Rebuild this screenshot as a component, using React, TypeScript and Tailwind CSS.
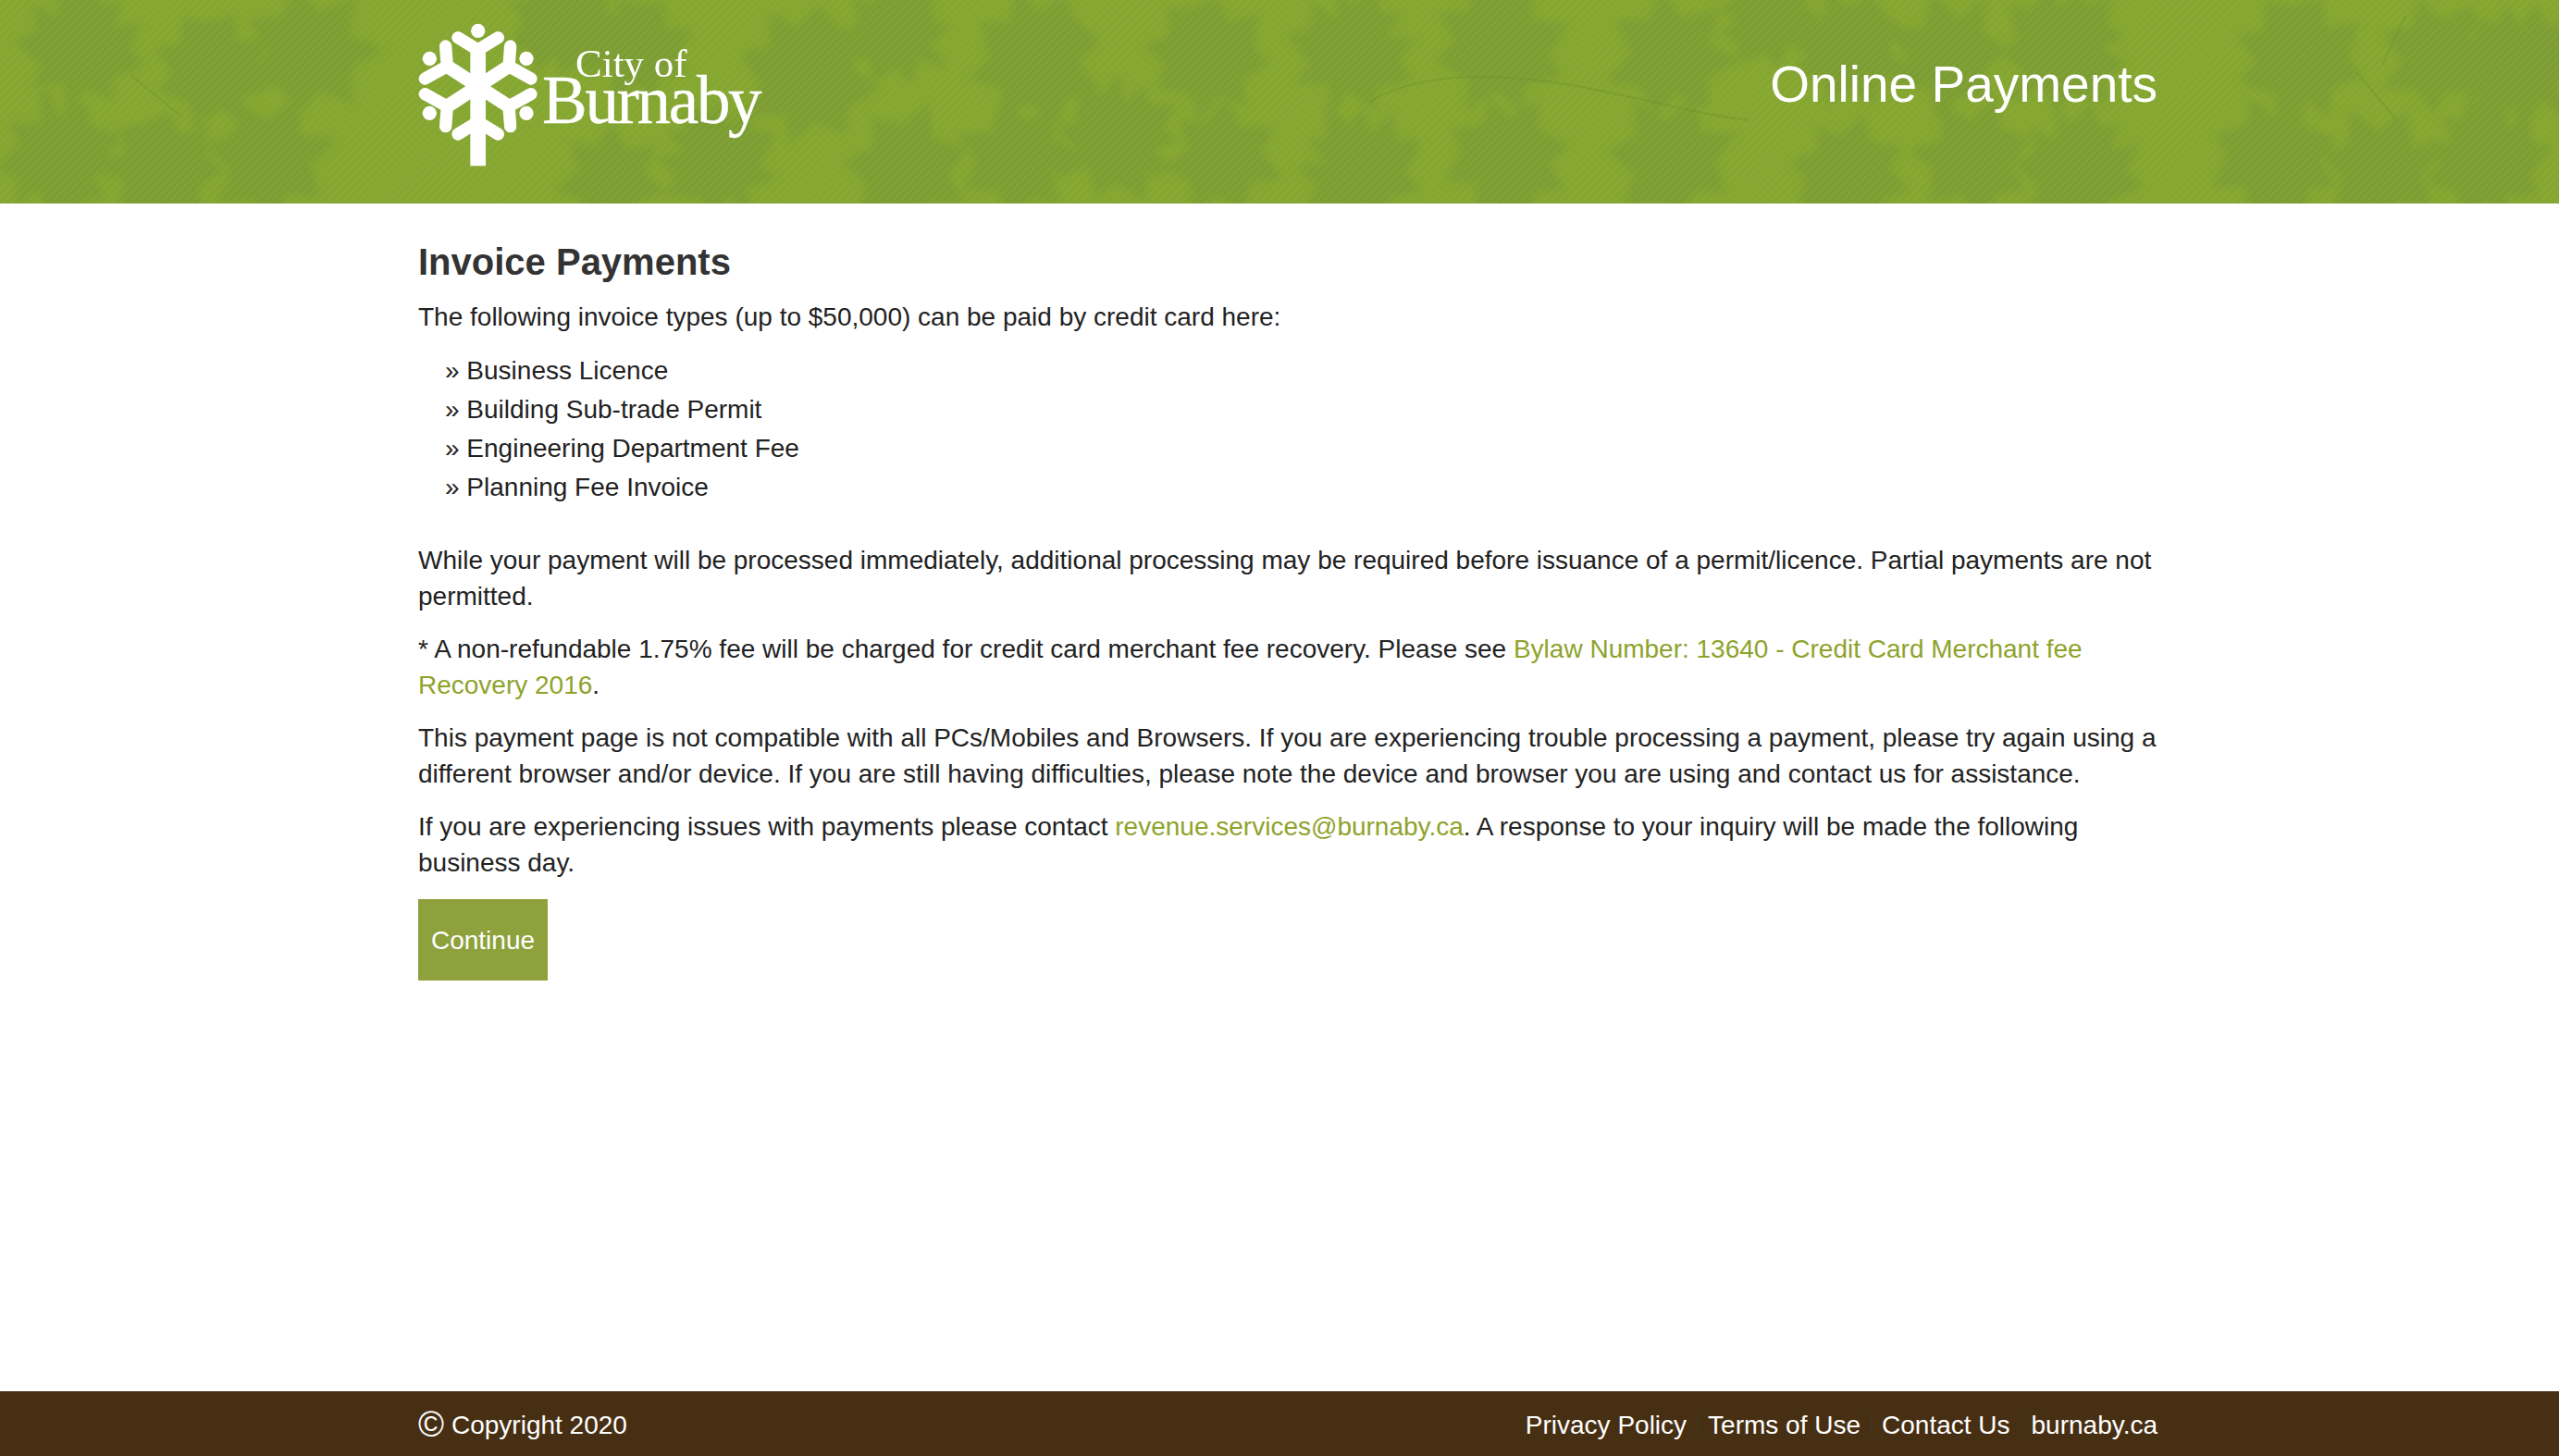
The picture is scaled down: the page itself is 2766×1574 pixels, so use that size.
import React from 'react';

const leaves = [
  { x: 88, y: 50, s: 1.2, r: 10 }, { x: 230, y: 75, s: 1.1, r: -25 }, { x: 335, y: 55, s: 1.25, r: 35 },
  { x: 66, y: 172, s: 1.2, r: 165 }, { x: 176, y: 182, s: 1.1, r: -40 }, { x: 290, y: 172, s: 1.2, r: 20 },
  { x: 610, y: 25, s: 1.1, r: 150 }, { x: 690, y: 52, s: 1.0, r: -15 }, { x: 660, y: 192, s: 1.0, r: 50 },
  { x: 776, y: 172, s: 1.15, r: -30 }, { x: 873, y: 80, s: 1.3, r: 15 }, { x: 980, y: 182, s: 1.2, r: 170 },
  { x: 970, y: 35, s: 1.0, r: -55 }, { x: 1120, y: 62, s: 1.25, r: 30 }, { x: 1100, y: 172, s: 1.15, r: -20 },
  { x: 1208, y: 150, s: 1.2, r: 60 }, { x: 1305, y: 60, s: 1.15, r: -35 }, { x: 1322, y: 172, s: 1.1, r: 155 },
  { x: 1462, y: 55, s: 1.2, r: 20 }, { x: 1621, y: 50, s: 1.25, r: -15 }, { x: 1806, y: 60, s: 1.2, r: 40 },
  { x: 1471, y: 182, s: 1.2, r: -30 }, { x: 1630, y: 172, s: 1.15, r: 165 }, { x: 1806, y: 172, s: 1.2, r: 15 },
  { x: 1912, y: 18, s: 1.0, r: -50 }, { x: 2000, y: 52, s: 1.1, r: 25 }, { x: 2106, y: 60, s: 1.15, r: -20 },
  { x: 2230, y: 52, s: 1.25, r: 45 }, { x: 2000, y: 190, s: 1.1, r: 150 }, { x: 2133, y: 172, s: 1.15, r: -35 },
  { x: 2247, y: 182, s: 1.2, r: 10 }, { x: 2485, y: 62, s: 1.2, r: -25 }, { x: 2635, y: 60, s: 1.1, r: 30 },
  { x: 2723, y: 70, s: 1.2, r: -45 }, { x: 2460, y: 172, s: 1.2, r: 160 }, { x: 2573, y: 182, s: 1.15, r: 20 },
  { x: 2688, y: 172, s: 1.2, r: -15 },
];

// three outlines so the leaves don't all look stamped from one shape
const leafPaths = [
  'M0 -62 L12 -40 L30 -46 L24 -22 L50 -30 L42 -6 L60 6 L32 24 L38 44 L8 36 L4 62 L-4 62 L-8 36 L-38 44 L-32 24 L-60 6 L-42 -6 L-50 -30 L-24 -22 L-30 -46 L-12 -40 Z',
  'M-6 -58 L16 -44 L40 -40 L34 -14 L62 -4 L40 18 L44 40 L14 38 L2 60 L-10 38 L-42 46 L-34 20 L-58 -2 L-36 -14 L-44 -42 L-18 -36 Z',
  'M6 -60 L20 -30 L52 -38 L38 -8 L56 16 L26 24 L24 52 L-2 40 L-30 54 L-28 22 L-58 8 L-36 -12 L-46 -42 L-14 -32 Z',
];

function HeaderTexture() {
  return (
    <svg className="absolute inset-0 h-full w-full" viewBox="0 0 2766 220" preserveAspectRatio="none" aria-hidden="true">
      <defs>
        <pattern id="weave" width="6" height="6" patternUnits="userSpaceOnUse" patternTransform="rotate(45)">
          <rect width="3" height="6" fill="#ffffff" fillOpacity="0.03" />
        </pattern>
        <filter id="soft"><feGaussianBlur stdDeviation="4" /></filter>
      </defs>
      <g filter="url(#soft)" fill="#7c9d30">
        {leaves.map((l, i) => (
          <path key={i} d={leafPaths[i % 3]} transform={`translate(${l.x} ${l.y}) rotate(${l.r}) scale(${l.s})`} />
        ))}
      </g>
      <path
        d="M141 81 L195 125 M1480 110 C1540 75 1620 80 1700 92 C1770 105 1840 125 1890 130 M2547 78 L2591 130 M2600 17 L2575 70"
        stroke="#6f922a"
        strokeOpacity="0.5"
        strokeWidth="2"
        fill="none"
      />
      <rect width="2766" height="220" fill="url(#weave)" />
    </svg>
  );
}

function Logo() {
  return (
    <svg className="block" width="380" height="190" viewBox="0 0 380 190" role="img" aria-label="City of Burnaby">
      <g transform="translate(-32 0) scale(0.3333)" fill="none" stroke="#fff" strokeLinecap="round" strokeLinejoin="round">
        <g fill="#fff" stroke="none">
          <circle cx="290" cy="100" r="23" />
          <circle cx="133" cy="190" r="23" />
          <circle cx="447" cy="190" r="23" />
          <circle cx="133" cy="367" r="23" />
          <circle cx="447" cy="367" r="23" />
          <rect x="265" y="150" width="50" height="388" />
        </g>
        <g strokeWidth="40">
          <path d="M225 122 L290 162 L355 122" />
          <path d="M225 435 L290 395 L355 435" />
          <path d="M185 150 L190 215 L118 255" />
          <path d="M395 150 L390 215 L462 255" />
          <path d="M185 410 L190 345 L118 305" />
          <path d="M395 410 L390 345 L462 305" />
          <path d="M190 215 L390 345 M390 215 L190 345" strokeWidth="44" />
        </g>
      </g>
      <g fill="#fff" fontFamily="'Liberation Serif', serif">
        <text x="170" y="83" fontSize="43">City of</text>
        <text x="134" y="133" fontSize="73" letterSpacing="-2.3" stroke="#fff" strokeWidth="0.4">Burnaby</text>
      </g>
    </svg>
  );
}

function Sep() {
  return <span className="mx-[11px] h-[26px] w-px bg-[#3a3a2a]" />;
}

export default function App() {
  return (
    <div className="flex h-screen flex-col overflow-hidden bg-white font-['Liberation_Sans',Arial,sans-serif] text-[28px] leading-[39px] text-[#222222]">
      <header className="relative h-[220px] shrink-0 bg-[#85a730]">
        <HeaderTexture />
        <div className="relative ml-[452px] flex h-full w-[1880px] items-start justify-between">
          <Logo />
          <h2 className="pt-[57px] text-[55px] leading-[68px] text-white">Online Payments</h2>
        </div>
      </header>

      <main className="ml-[452px] w-[1880px] flex-1 pt-[41px]">
        <h1 className="text-[40px] font-bold leading-[44px] text-[#333333]">Invoice Payments</h1>
        <p className="mt-[18px]">The following invoice types (up to $50,000) can be paid by credit card here:</p>
        <ul className="mt-[18px] pl-[29px] leading-[42px]">
          <li>» Business Licence</li>
          <li>» Building Sub-trade Permit</li>
          <li>» Engineering Department Fee</li>
          <li>» Planning Fee Invoice</li>
        </ul>
        <p className="mt-[38px]">
          While your payment will be processed immediately, additional processing may be required before issuance of a permit/licence. Partial payments are not permitted.
        </p>
        <p className="mt-[18px]">
          * A non-refundable 1.75% fee will be charged for credit card merchant fee recovery. Please see{' '}
          <a href="#" className="text-[#8ea32c]">Bylaw Number: 13640 - Credit Card Merchant fee Recovery 2016</a>.
        </p>
        <p className="mt-[18px]">
          This payment page is not compatible with all PCs/Mobiles and Browsers. If you are experiencing trouble processing a payment, please try again using a different browser and/or device. If you are still having difficulties, please note the device and browser you are using and contact us for assistance.
        </p>
        <p className="mt-[18px]">
          If you are experiencing issues with payments please contact{' '}
          <a href="#" className="text-[#8ea32c]">revenue.services@burnaby.ca</a>. A response to your inquiry will be made the following business day.
        </p>
        <button className="mt-[20px] block h-[88px] w-[140px] bg-[#8ea13c] text-center text-[28px] text-white">Continue</button>
      </main>

      <footer className="h-[70px] shrink-0 bg-[#472f13] text-white">
        <div className="ml-[452px] flex h-full w-[1880px] items-center justify-between pt-[2px]">
          <span className="flex items-center gap-[8px]">
            <span className="text-[38px] leading-[39px]">©</span>
            <span>Copyright 2020</span>
          </span>
          <nav className="flex items-center">
            <a href="#">Privacy Policy</a>
            <Sep />
            <a href="#">Terms of Use</a>
            <Sep />
            <a href="#">Contact Us</a>
            <Sep />
            <a href="#">burnaby.ca</a>
          </nav>
        </div>
      </footer>
    </div>
  );
}
